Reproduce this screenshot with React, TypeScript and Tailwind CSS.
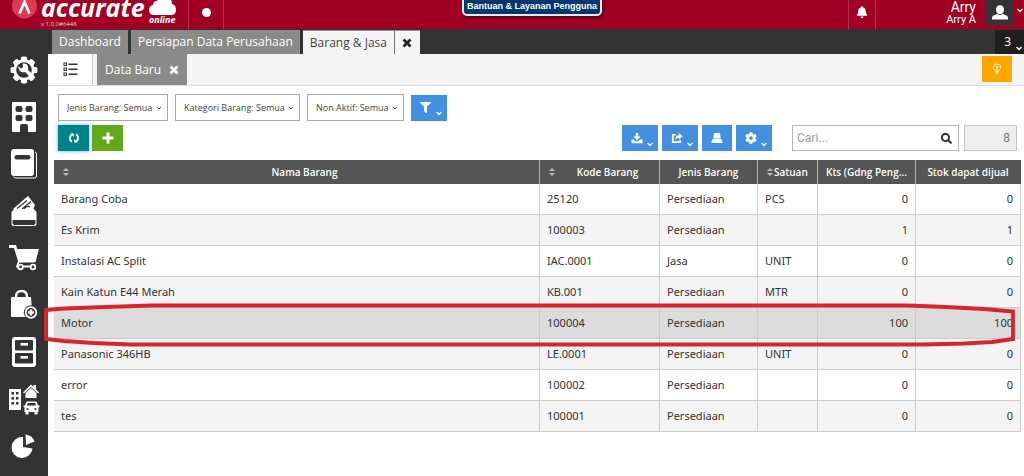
import React from "react";
import { FaBell, FaCog, FaFilter, FaSearch } from "react-icons/fa";

type Item = {
  name: string;
  code: string;
  kind: string;
  unit: string;
  qty: number;
  stock: number;
};

const items: Item[] = [
  { name: "Barang Coba", code: "25120", kind: "Persediaan", unit: "PCS", qty: 0, stock: 0 },
  { name: "Es Krim", code: "100003", kind: "Persediaan", unit: "", qty: 1, stock: 1 },
  { name: "Instalasi AC Split", code: "IAC.0001", kind: "Jasa", unit: "UNIT", qty: 0, stock: 0 },
  { name: "Kain Katun E44 Merah", code: "KB.001", kind: "Persediaan", unit: "MTR", qty: 0, stock: 0 },
  { name: "Motor", code: "100004", kind: "Persediaan", unit: "", qty: 100, stock: 100 },
  { name: "Panasonic 346HB", code: "LE.0001", kind: "Persediaan", unit: "UNIT", qty: 0, stock: 0 },
  { name: "error", code: "100002", kind: "Persediaan", unit: "", qty: 0, stock: 0 },
  { name: "tes", code: "100001", kind: "Persediaan", unit: "", qty: 0, stock: 0 },
];

const SELECTED = "Motor";

function GearIcon() {
  return (
    <svg viewBox="0 0 32 32" className="size-8" aria-hidden="true">
      <g fill="#fff">
        {[0, 45, 90, 135].map((a) => (
          <rect key={a} x="12.9" y="2.6" width="6.2" height="26.8" rx="1.6" transform={`rotate(${a} 16 16)`} />
        ))}
        <circle cx="16" cy="16" r="10.7" />
      </g>
      <circle cx="16" cy="16" r="7.8" fill="#333" />
      <path
        d="M10.4 12.2l2.8 2.2 2-1.4-.6-3.2c2.8-.8 5.4.8 5.6 3.6.1.9-.1 1.6-.4 2.3l3.4 3.4c.8.9.6 1.9-.1 2.5-.7.7-1.7.7-2.5-.1l-3.5-3.5c-3.3 1.3-7-1.2-6.7-5.8z"
        fill="#fff"
      />
    </svg>
  );
}

function BuildingIcon() {
  return (
    <svg viewBox="0 0 26 32" className="h-8 w-[26px]" aria-hidden="true">
      <path d="M2 1h22q1 0 1 1v28q0 1-1 1h-7v-6q0-2-2-2h-4q-2 0-2 2v6H2q-1 0-1-1V2q0-1 1-1z" fill="#fff" />
      <g fill="#333">
        <rect x="4.500" y="5" width="7" height="6" rx="2" />
        <rect x="14.500" y="5" width="7" height="6" rx="2" />
        <rect x="4.500" y="14" width="7" height="6" rx="2" />
        <rect x="14.500" y="14" width="7" height="6" rx="2" />
      </g>
    </svg>
  );
}

function BookIcon() {
  return (
    <svg viewBox="0 0 28 32" className="h-8 w-7" aria-hidden="true">
      <path d="M25 4q1.500.500 1.500 2v22q0 2-2 2H6q-2 0-2.500-1.500" fill="none" stroke="#fff" strokeWidth="1" />
      <rect x="1" y="1" width="23" height="27" rx="3" fill="#fff" />
      <rect x="4.500" y="7" width="16" height="4.500" rx="2.200" fill="#333" />
    </svg>
  );
}

function WalletIcon() {
  return (
    <svg viewBox="0 0 28 32" className="h-8 w-7" aria-hidden="true">
      <path d="M3 14L18 1l7 9-2 5z" fill="#fff" />
      <path d="M7 13.500l10-8M12 14l9-7.500M14 14q3-4 6-2" fill="none" stroke="#333" strokeWidth="1.200" />
      <path d="M4 14h20l2.500 3v12q0 2-2 2h-21q-2 0-2-2V17z" fill="#fff" />
      <path d="M2.500 25h23V28q0 2-2 2h-19q-2 0-2-2z" fill="#333" />
    </svg>
  );
}

function CartIcon() {
  return (
    <svg viewBox="0 0 32 28" className="h-7 w-8" aria-hidden="true">
      <path d="M1 2.500h6L11.500 17h15" fill="none" stroke="#fff" strokeWidth="2.800" />
      <path d="M8 5h23l-3.500 13H11.500z" fill="#fff" />
      <path d="M11 17l-2 5.500h18" fill="none" stroke="#fff" strokeWidth="1.800" />
      <circle cx="12.500" cy="23" r="2.300" fill="#333" stroke="#fff" strokeWidth="1.800" />
      <circle cx="25" cy="23" r="2.300" fill="#333" stroke="#fff" strokeWidth="1.800" />
    </svg>
  );
}

function BagIcon() {
  return (
    <svg viewBox="0 0 28 32" className="h-8 w-7" aria-hidden="true">
      <path d="M6 10V8q0-6 5.500-6T17 8v2" fill="none" stroke="#fff" strokeWidth="2.400" />
      <path d="M2 8h19l1.500 20H2q-1 0-1-1V9q0-1 1-1z" fill="#fff" />
      <circle cx="21" cy="23.500" r="7.200" fill="#333" />
      <circle cx="21" cy="23.500" r="5.300" fill="none" stroke="#fff" strokeWidth="1.800" />
      <path d="M21 20.500v6M18 23.500h6" stroke="#fff" strokeWidth="2.400" />
    </svg>
  );
}

function DrawerIcon() {
  return (
    <svg viewBox="0 0 26 32" className="h-8 w-[26px]" aria-hidden="true">
      <rect x="1" y="1" width="24" height="30" rx="3" fill="#fff" />
      <g fill="#333">
        <rect x="4" y="4" width="18" height="10.500" rx="1" />
        <rect x="4" y="17" width="18" height="10.500" rx="1" />
      </g>
      <rect x="9.500" y="7" width="7.500" height="2.600" fill="#fff" />
      <rect x="9.500" y="20" width="7.500" height="2.600" fill="#fff" />
    </svg>
  );
}

function AssetsIcon() {
  return (
    <svg viewBox="0 0 32 32" className="size-8" aria-hidden="true">
      <rect x="1" y="6" width="12" height="21" fill="#fff" />
      <g fill="#333">
        {[9, 14, 19].map((y) => (
          <React.Fragment key={y}>
            <rect x="3.500" y={y} width="2.500" height="2.500" />
            <rect x="8" y={y} width="2.500" height="2.500" />
          </React.Fragment>
        ))}
      </g>
      <path d="M15 9.500L23 1.500l2.500 2.500V2h2.500v4.500l3 3-1 1-7-6.500-7 6.500z" fill="#fff" />
      <path d="M17.500 10L23 5l5.500 5v5h-11z" fill="#fff" />
      <path d="M18.500 18.500h10l1.500 4h1.500v1.500l-1 .5v4.500h-1V31.500h-3V29h-6v2.500h-3V29h-1v-4.500l-1-.5v-1.500h1.500z" fill="#fff" />
      <path d="M19.800 20h7.400l.8 2.500h-9z" fill="#333" />
      <circle cx="19.500" cy="26" r="1" fill="#333" />
      <circle cx="27.500" cy="26" r="1" fill="#333" />
    </svg>
  );
}

function PieIcon() {
  return (
    <svg viewBox="0 0 28 28" className="size-7" aria-hidden="true">
      <path d="M13 5v10l9.500 1.500A10.500 10.500 0 1 1 13 5z" fill="#fff" />
      <path d="M15.500 2.500Q22 3 24.500 9.500L16 13z" fill="#fff" />
    </svg>
  );
}

const menu = [
  { label: "Pengaturan", icon: <GearIcon /> },
  { label: "Perusahaan", icon: <BuildingIcon /> },
  { label: "Buku Besar", icon: <BookIcon /> },
  { label: "Kas & Bank", icon: <WalletIcon /> },
  { label: "Penjualan", icon: <CartIcon /> },
  { label: "Pembelian", icon: <BagIcon /> },
  { label: "Persediaan", icon: <DrawerIcon /> },
  { label: "Aset Tetap", icon: <AssetsIcon /> },
  { label: "Laporan", icon: <PieIcon /> },
];

function Caret() {
  return (
    <svg viewBox="0 0 8 5" className="h-[5px] w-2 shrink-0" aria-hidden="true">
      <path d="M1.500 1L4 3.500 6.500 1" fill="none" stroke="currentColor" strokeWidth="1.300" />
    </svg>
  );
}

function ThinCaret() {
  return (
    <svg viewBox="0 0 6 4" className="h-1 w-1.5 shrink-0" aria-hidden="true">
      <path d="M.7.7L3 3 5.300.7" fill="none" stroke="currentColor" strokeWidth=".9" />
    </svg>
  );
}

function CloseIcon() {
  return (
    <svg viewBox="0 0 10 10" className="size-2.5 shrink-0" aria-hidden="true">
      <path d="M1.500 1.500l7 7M8.500 1.500l-7 7" fill="none" stroke="currentColor" strokeWidth="2.700" />
    </svg>
  );
}

function PlusIcon() {
  return (
    <svg viewBox="0 0 12 12" className="size-3 shrink-0" aria-hidden="true">
      <path d="M6 .5v11M.5 6h11" fill="none" stroke="currentColor" strokeWidth="3" />
    </svg>
  );
}

function UserIcon() {
  return (
    <svg viewBox="0 0 16 15" className="h-[15px] w-4 shrink-0" aria-hidden="true">
      <ellipse cx="8" cy="4.700" rx="4" ry="4.500" fill="currentColor" />
      <path d="M0 14.500v-2q0-1.500 2-2.200L5.500 9Q8 11 10.500 9l3.500 1.300q2 .7 2 2.200v2z" fill="currentColor" />
    </svg>
  );
}

function SortIcon() {
  return (
    <svg viewBox="0 0 8 10" className="h-[10px] w-2 shrink-0 text-[#bbb]" aria-hidden="true">
      <path d="M4 1l3 3H1zM4 9l3-3H1z" fill="currentColor" />
    </svg>
  );
}

function DownloadIcon() {
  return (
    <svg viewBox="0 0 12 12" className="size-3" aria-hidden="true">
      <path d="M4.700 1h2.600v3.500H9.500L6 8.200 2.500 4.500h2.200z" fill="#fff" />
      <path d="M.5 7.500H3l1.500 1.700h3L9 7.500h2.500v3.800H.5z" fill="#fff" />
    </svg>
  );
}

function ShareIcon() {
  return (
    <svg viewBox="0 0 12 12" className="size-3" aria-hidden="true">
      <path d="M4.500 2.800H1.800v7.400h7.400V8" fill="none" stroke="#fff" strokeWidth="1.800" />
      <path d="M7.800 1l4 3.300-4 3.200V5.700Q5.500 5.500 4.300 8 4.300 3.500 7.800 3z" fill="#fff" />
    </svg>
  );
}

function PrintIcon() {
  return (
    <svg viewBox="0 0 12 12" className="size-3" aria-hidden="true">
      <path d="M3 1h6l.7 5.500H2.300z" fill="#fff" />
      <path d="M1.500 7h9L11.700 11H.3z" fill="#fff" />
    </svg>
  );
}

function RefreshIcon() {
  return (
    <svg viewBox="0 0 12 12" className="size-3" aria-hidden="true">
      <path d="M4.800 2.300Q2 3 2 6T4 9.700M7.200 9.700Q10 9 10 6T8 2.300" fill="none" stroke="#fff" strokeWidth="1.900" />
      <path d="M2.500 1.500H5.800V5zM9.500 10.500H6.200V7z" fill="#fff" />
    </svg>
  );
}

function BulbIcon() {
  return (
    <svg viewBox="0 0 12 14" className="h-3 w-[10px]" aria-hidden="true">
      <path d="M4 10V8.500Q1.500 7.500 1.500 4.800 1.800 1 6 1t4.500 3.800Q10.500 7.500 8 8.500V10z" fill="none" stroke="#fff" strokeWidth="1" />
      <path d="M6 4.500V10M4.500 4h3M4 11.500h4M5 13h2" fill="none" stroke="#fff" strokeWidth="1" />
    </svg>
  );
}

function ListIcon() {
  return (
    <svg viewBox="0 0 15 15" className="size-[15px]" aria-hidden="true">
      {[1, 6, 11].map((y) => (
        <React.Fragment key={y}>
          <rect x="1" y={y} width="2.500" height="2.500" fill="none" stroke="#333" />
          <rect x="5.500" y={y + 0.5} width="9" height="1.500" fill="#333" />
        </React.Fragment>
      ))}
    </svg>
  );
}

function Header() {
  return (
    <header className="relative flex h-[29px] items-start justify-between overflow-hidden bg-[#a10024] text-white">
      <div className="flex h-full">
        <h1 className="relative w-[188px]">
          <svg viewBox="0 0 188 29" className="h-[29px] w-[188px]" aria-hidden="true">
            <circle cx="24.500" cy="6" r="12.500" fill="#dc3a55" />
            <path d="M19.500 13.500L24.500 2l5 11.500" fill="none" stroke="#fff" strokeWidth="2.800" />
            <path
              d="M154 15q-5 0-5-5 0-4 4-5 0-4 4-4Q160-5 167-3q5 1 5 7 4 1 4 6t-5 5z"
              fill="#fff"
            />
          </svg>
          <span className="absolute -top-[5px] left-[41px] text-[25px] leading-6 font-bold italic">
            accurate
          </span>
          <span className="absolute top-[15px] left-[149px] text-[9px] leading-[10px] font-bold italic">online</span>
          <span className="absolute top-[20px] left-[41px] text-[6px] leading-[8px] text-[#f3c6cf]">v 1.0.0#6448</span>
        </h1>
        <button type="button" aria-label="Status" className="flex w-9 items-start justify-center border-x border-[#b5304e] pt-2">
          <span className="size-[9px] rounded-full bg-white" />
        </button>
      </div>

      <div className="pointer-events-none absolute inset-x-0 top-0 flex justify-center pl-10">
        <a
          href="#bantuan"
          className="-mt-1 rounded-[5px] border-2 border-[#e8eaf2] bg-[#04386f] px-[3px] font-[family-name:'Liberation_Sans',Arial,sans-serif] text-[9px] leading-[16px] font-bold whitespace-nowrap text-white shadow-[1px_2px_4px_rgba(0,0,0,0.5)]"
        >
          Bantuan &amp; Layanan Pengguna
        </a>
      </div>

      <div className="flex h-full items-start">
        <button type="button" aria-label="Notifikasi" className="flex h-full w-7 items-start justify-center border-x border-[#b5304e] pt-1.5">
          <FaBell className="size-3" />
        </button>
        <div className="flex w-[100px] flex-col items-end pt-0.5 font-[family-name:'Roboto','Liberation_Sans',sans-serif]">
          <span className="text-[14px] leading-[11px]">Arry</span>
          <span className="text-[11px] leading-[13px]">Arry A</span>
        </div>
        <button type="button" aria-label="Profil" className="ml-2.5 flex items-start">
          <span className="flex h-[25px] w-[27px] items-center justify-center bg-[#333]">
            <UserIcon />
          </span>
          <span className="mt-2 ml-[3px]">
            <Caret />
          </span>
        </button>
      </div>
    </header>
  );
}

function TabBar() {
  return (
    <nav aria-label="Tab" className="flex h-[25px] items-stretch justify-between bg-[#333] pt-px pl-1 text-[12px]">
      <div className="flex gap-[3px]">
        <button type="button" className="bg-[#8a8a8a] px-[7px] text-white">Dashboard</button>
        <button type="button" className="bg-[#8a8a8a] px-[7px] text-white">Persiapan Data Perusahaan</button>
        <div className="flex border-t border-[#6f9ac5] bg-[#f4f4f4] text-[#444]">
          <button type="button" className="border-r border-[#777] px-[7px]">Barang &amp; Jasa</button>
          <button type="button" aria-label="Tutup" className="flex w-[25px] items-center justify-center text-[#222]">
            <CloseIcon />
          </button>
        </div>
      </div>
      <button type="button" className="flex w-[29px] items-center justify-end gap-1 bg-[#1f1f1f] pr-px text-white">
        3
        <span className="mt-3">
          <Caret />
        </span>
      </button>
    </nav>
  );
}

function Filter({ label }: { label: string }) {
  return (
    <div className="relative flex h-[27px] items-center border border-[#aaa] bg-white text-[9px] text-[#444]">
      <select aria-label={label} className="h-full appearance-none bg-transparent pr-3.5 pl-2 outline-none">
        <option>{label}: Semua</option>
      </select>
      <span className="pointer-events-none absolute right-[5px]">
        <ThinCaret />
      </span>
    </div>
  );
}

function BlueButton({ label, caret = true, children }: { label: string; caret?: boolean; children: React.ReactNode }) {
  return (
    <button
      type="button"
      aria-label={label}
      className={
        caret
          ? "flex h-[26px] w-9 items-center justify-between bg-[#4290df] pr-1 pl-[9px] text-white"
          : "flex h-[26px] w-[30px] items-center justify-center bg-[#4290df] text-white"
      }
    >
      {children}
      {caret && (
        <span className="mt-3">
          <Caret />
        </span>
      )}
    </button>
  );
}

function Toolbar() {
  return (
    <div className="flex flex-col gap-1 pt-2 pr-[7px] pl-2.5">
      <div className="flex items-center gap-[7px]">
        <Filter label="Jenis Barang" />
        <Filter label="Kategori Barang" />
        <Filter label="Non Aktif" />
        <BlueButton label="Saring">
          <FaFilter className="size-[11px]" />
        </BlueButton>
      </div>
      <div className="flex items-center">
        <button type="button" aria-label="Muat ulang" className="flex h-[26px] w-[31px] items-center justify-center bg-[#008489] shadow-[0_0_4px_#4fb3e8]">
          <RefreshIcon />
        </button>
        <button type="button" aria-label="Tambah" className="ml-[3px] flex h-[26px] w-[31px] items-center justify-center bg-[#62a818] text-white">
          <PlusIcon />
        </button>
        <div className="ml-auto flex gap-1">
          <BlueButton label="Unduh">
            <DownloadIcon />
          </BlueButton>
          <BlueButton label="Bagikan">
            <ShareIcon />
          </BlueButton>
          <BlueButton label="Cetak" caret={false}>
            <PrintIcon />
          </BlueButton>
          <BlueButton label="Pengaturan kolom">
            <FaCog className="size-3" />
          </BlueButton>
        </div>
        <div className="ml-5 flex h-[26px] w-[167px] items-center border border-[#b5b5b5] bg-white pr-1.5 pl-1">
          <input
            type="text"
            aria-label="Cari"
            placeholder="Cari..."
            className="min-w-0 flex-1 font-[family-name:'Roboto','Liberation_Sans',sans-serif] text-[12px] outline-none placeholder:text-[#999]"
          />
          <FaSearch className="size-[11px] text-[#222]" />
        </div>
        <input
          type="text"
          aria-label="Jumlah data"
          readOnly
          value="8"
          className="ml-[5px] h-[26px] w-[53px] border border-[#c4c4c4] bg-[#eee] pr-1.5 text-right font-[family-name:'Roboto','Liberation_Sans',sans-serif] text-[12px] text-[#777] outline-none"
        />
      </div>
    </div>
  );
}

const head = "h-6 border-r border-[#b5b5b5] p-0 text-center text-[10px] leading-4 font-semibold last:border-[#555]";
const cell = "border-r border-b border-[#ccc] px-[7px] py-0 font-[family-name:'Noto_Sans','Open_Sans',sans-serif]";

function ItemTable() {
  return (
    <div className="relative mt-[9px] mr-[3px] ml-1.5">
      <table className="w-full table-fixed border-separate border-spacing-0 text-[11px] text-[#333]">
        <colgroup>
          <col />
          <col className="w-[120px]" />
          <col className="w-[98px]" />
          <col className="w-[60px]" />
          <col className="w-[98px]" />
          <col className="w-[105px]" />
        </colgroup>
        <thead className="bg-[#555] text-white">
          <tr>
            <th scope="col" className={head}>
              <div className="flex items-center pl-2">
                <SortIcon />
                <span className="flex-1">Nama Barang</span>
              </div>
            </th>
            <th scope="col" className={head}>
              <div className="flex items-center pl-2">
                <SortIcon />
                <span className="flex-1">Kode Barang</span>
              </div>
            </th>
            <th scope="col" className={head}>Jenis Barang</th>
            <th scope="col" className={head}>
              <div className="flex items-center pl-2">
                <SortIcon />
                Satuan
              </div>
            </th>
            <th scope="col" className={head}>Kts (Gdng Peng...</th>
            <th scope="col" className={head}>Stok dapat dijual</th>
          </tr>
        </thead>
        <tbody>
          {items.map((item) => (
            <tr
              key={item.code}
              className={item.name === SELECTED ? "h-[31px] bg-[#dcdcdc]" : "h-[31px] even:bg-[#f4f4f4]"}
            >
              <td className={cell}>{item.name}</td>
              <td className={cell}>{item.code}</td>
              <td className={cell}>{item.kind}</td>
              <td className={cell}>{item.unit}</td>
              <td className={`${cell} text-right`}>{item.qty}</td>
              <td className={`${cell} text-right`}>{item.stock}</td>
            </tr>
          ))}
        </tbody>
      </table>

      <svg
        viewBox="0 0 976 44"
        preserveAspectRatio="none"
        className="pointer-events-none absolute top-[143px] -left-[10px] h-11 w-[calc(100%+9px)]"
        aria-hidden="true"
      >
        <path
          d="M2 7L20 5.500 62 4 108 2.500H864L902 4 940 6 969 8.500V36L948 39 920 40.500 880 41.500H85L50 40 20 38 2 36z"
          fill="none"
          stroke="#d5252d"
          strokeWidth="3.800"
        />
      </svg>
    </div>
  );
}

export default function App() {
  return (
    <div className="flex min-h-screen flex-col overflow-hidden bg-white font-[family-name:'Open_Sans','Noto_Sans',sans-serif]">
      <Header />
      <div className="flex flex-1">
        <nav aria-label="Menu utama" className="flex w-12 shrink-0 flex-col bg-[#333] pt-[17px]">
          {menu.map((m) => (
            <button key={m.label} type="button" aria-label={m.label} className="flex h-[47px] items-center justify-center">
              {m.icon}
            </button>
          ))}
        </nav>
        <main className="min-w-0 flex-1">
          <TabBar />
          <div className="flex h-8 items-stretch border-b border-[#ddd] bg-[#f4f4f4] pr-3 text-[12px]">
            <button type="button" aria-label="Daftar" className="flex w-[45px] items-center justify-center border-r border-[#ccc] bg-white">
              <ListIcon />
            </button>
            <div className="ml-1 flex items-center gap-2 bg-[#8a8a8a] px-2 text-white">
              <button type="button">Data Baru</button>
              <button type="button" aria-label="Tutup Data Baru">
                <CloseIcon />
              </button>
            </div>
            <button type="button" aria-label="Bantuan" className="mt-0.5 ml-auto flex h-[26px] w-[30px] items-center justify-center bg-[#ffa500]">
              <BulbIcon />
            </button>
          </div>
          <Toolbar />
          <ItemTable />
        </main>
      </div>
    </div>
  );
}
